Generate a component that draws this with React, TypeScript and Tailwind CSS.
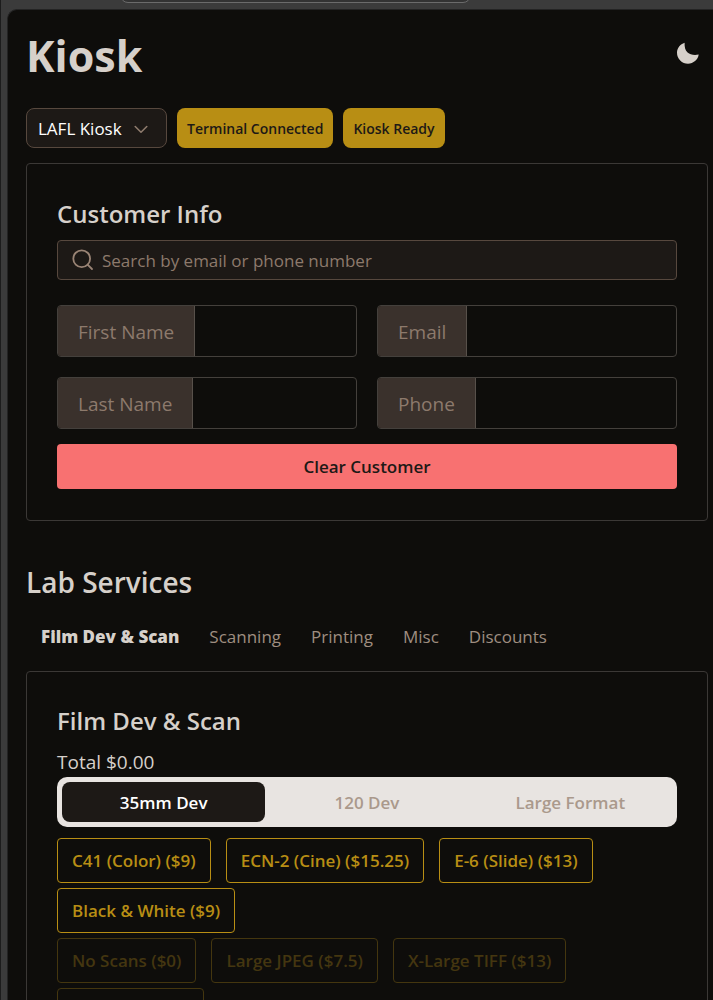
import { useState } from "react";

const tabs = ["Film Dev & Scan", "Scanning", "Printing", "Misc", "Discounts"];
const formats = ["35mm Dev", "120 Dev", "Large Format"];
const processes = ["C41 (Color) ($9)", "ECN-2 (Cine) ($15.25)", "E-6 (Slide) ($13)", "Black & White ($9)"];
const scans = ["No Scans ($0)", "Large JPEG ($7.5)", "X-Large TIFF ($13)", ""];

function Field({ id, label, type = "text" }: { id: string; label: string; type?: string }) {
  return (
    <div className="flex h-[52px] overflow-hidden rounded border border-[#44403c]">
      <label
        htmlFor={id}
        className="flex shrink-0 items-center border-r border-[#57504a] bg-[#3a312c] px-5 pt-0.5 text-[19px] text-[#8d7a6c]"
      >
        {label}
      </label>
      <input id={id} type={type} className="min-w-0 flex-1 bg-transparent px-3 text-lg text-[#d6d0ca] outline-none" />
    </div>
  );
}

function Options({ items, disabled = false }: { items: string[]; disabled?: boolean }) {
  return (
    <div className="flex flex-wrap gap-x-[15px] gap-y-[5px]">
      {items.map((item) => (
        <button
          key={item}
          type="button"
          disabled={disabled}
          className="h-[45px] rounded border border-[#b88e14] px-3.5 text-[17px] font-semibold text-[#b88e14] empty:w-[147px] disabled:border-[#44360f] disabled:text-[#443610]"
        >
          {item}
        </button>
      ))}
    </div>
  );
}

export default function App() {
  const [tab, setTab] = useState(tabs[0]);
  const [format, setFormat] = useState(formats[0]);

  return (
    <div className="flex h-screen flex-col overflow-hidden border-l border-[#1c1c1c] bg-[#3b3b3b] font-['Open_Sans','Noto_Sans',sans-serif] text-[#d6d0ca]">
      <div className="h-[9px] shrink-0">
        <div className="ml-[119px] flex h-[3px] w-[351px] items-end overflow-hidden">
          <div className="h-5 w-full shrink-0 rounded-lg border border-[#6b6b6b] bg-[#333333]" />
        </div>
      </div>
      <main className="ml-1.5 min-h-0 flex-1 overflow-hidden rounded-tl-[10px] border-t border-l border-[#242424] bg-[#0e0d0b] pr-[5px] pl-[18px]">
        <header className="flex h-[98px] items-start justify-between pt-4 pr-2">
          <h1 className="text-[43px] leading-[60px] font-bold">Kiosk</h1>
          <button type="button" aria-label="Toggle theme" className="mt-[15px]">
            <svg viewBox="0 0 24 24" className="size-6" fill="currentColor" aria-hidden="true">
              <path d="M8.6 1.7C4.2 3.1 1 7 1 11.8a11 10.9 0 0 0 11 10.9c5.4 0 9.9-3.8 10.7-9.1-4.6.8-8.7.2-11.1-2.1C9.200 9.200 8.400 6.200 8.600 1.700Z" />
            </svg>
          </button>
        </header>

        <div className="flex flex-wrap gap-2.5">
          <div className="relative">
            <select
              aria-label="Terminal"
              className="h-10 w-[141px] appearance-none rounded-lg border border-[#57483e] bg-[#1d1916] pt-0.5 pl-[11px] text-[17px] text-white"
            >
              <option>LAFL Kiosk</option>
            </select>
            <svg
              viewBox="0 0 20 20"
              className="pointer-events-none absolute top-[11px] right-4 size-5"
              fill="none"
              stroke="#8d7a6c"
              strokeWidth="1.6"
              strokeLinecap="round"
              strokeLinejoin="round"
              aria-hidden="true"
            >
              <path d="M4.2 7.5 10 13.2l5.8-5.7" />
            </svg>
          </div>
          <span className="flex h-10 items-center rounded-lg bg-[#b88e14] px-2.5 text-[14px] font-semibold text-[#1d1916]">
            Terminal Connected
          </span>
          <span className="flex h-10 items-center rounded-lg bg-[#b88e14] px-2.5 text-[14px] font-semibold text-[#1d1916]">
            Kiosk Ready
          </span>
        </div>

        <section className="mt-[15px] rounded border border-[#3b3836] px-[30px] pt-[30px] pb-[31px]">
          <h2 className="text-[24px] leading-10 font-semibold">Customer Info</h2>
          <label className="mt-1.5 flex h-10 items-center rounded border border-[#57483e] bg-[#1d1916] px-3.5">
            <svg
              viewBox="0 0 24 24"
              className="size-6 shrink-0"
              fill="none"
              stroke="#9a8475"
              strokeWidth="1.8"
              strokeLinecap="round"
              aria-hidden="true"
            >
              <circle cx="9.700" cy="10.700" r="8.400" />
              <path d="m15.800 16.800 4.200 4.200" />
            </svg>
            <input
              type="search"
              aria-label="Search customers"
              placeholder="Search by email or phone number"
              className="ml-1.5 min-w-0 flex-1 bg-transparent pt-0.5 text-[17px] outline-none placeholder:text-[#8d7a6c]"
            />
          </label>
          <div className="mt-[25px] grid grid-cols-2 gap-5">
            <Field id="first" label="First Name" />
            <Field id="email" label="Email" type="email" />
            <Field id="last" label="Last Name" />
            <Field id="phone" label="Phone" type="tel" />
          </div>
          <button
            type="button"
            className="mt-[15px] h-[45px] w-full rounded bg-[#f87171] text-[17px] font-semibold text-[#1d1916]"
          >
            Clear Customer
          </button>
        </section>

        <h2 className="mt-[39px] text-[28px] leading-[44px] font-semibold">Lab Services</h2>
        <nav className="mt-2.5 flex h-[45px]">
          {tabs.map((name) => (
            <button
              key={name}
              type="button"
              onClick={() => setTab(name)}
              className={
                name === tab
                  ? "px-[15px] text-[17px] font-extrabold"
                  : "px-[15px] text-[17px] text-[#9f8d80]"
              }
            >
              {name}
            </button>
          ))}
        </nav>

        <section className="mt-3 rounded border border-[#3b3836] px-[30px] pt-[29px] pb-[30px]">
          <h3 className="text-[24px] leading-10 font-semibold">Film Dev &amp; Scan</h3>
          <p className="mt-[7px] text-[19px] leading-[29px]">Total $0.00</p>
          <div className="grid h-[50px] grid-cols-3 rounded-[10px] bg-[#e8e4e1] p-[5px]">
            {formats.map((name) => (
              <button
                key={name}
                type="button"
                onClick={() => setFormat(name)}
                className={
                  name === format
                    ? "rounded-lg bg-[#1d1916] pt-0.5 text-[17px] font-semibold text-white"
                    : "rounded-lg pt-0.5 text-[17px] font-semibold text-[#aa998c]"
                }
              >
                {name}
              </button>
            ))}
          </div>
          <div className="mt-[11px] flex flex-col gap-[5px]">
            <Options items={processes} />
            <Options items={scans} disabled />
          </div>
        </section>
      </main>
    </div>
  );
}
